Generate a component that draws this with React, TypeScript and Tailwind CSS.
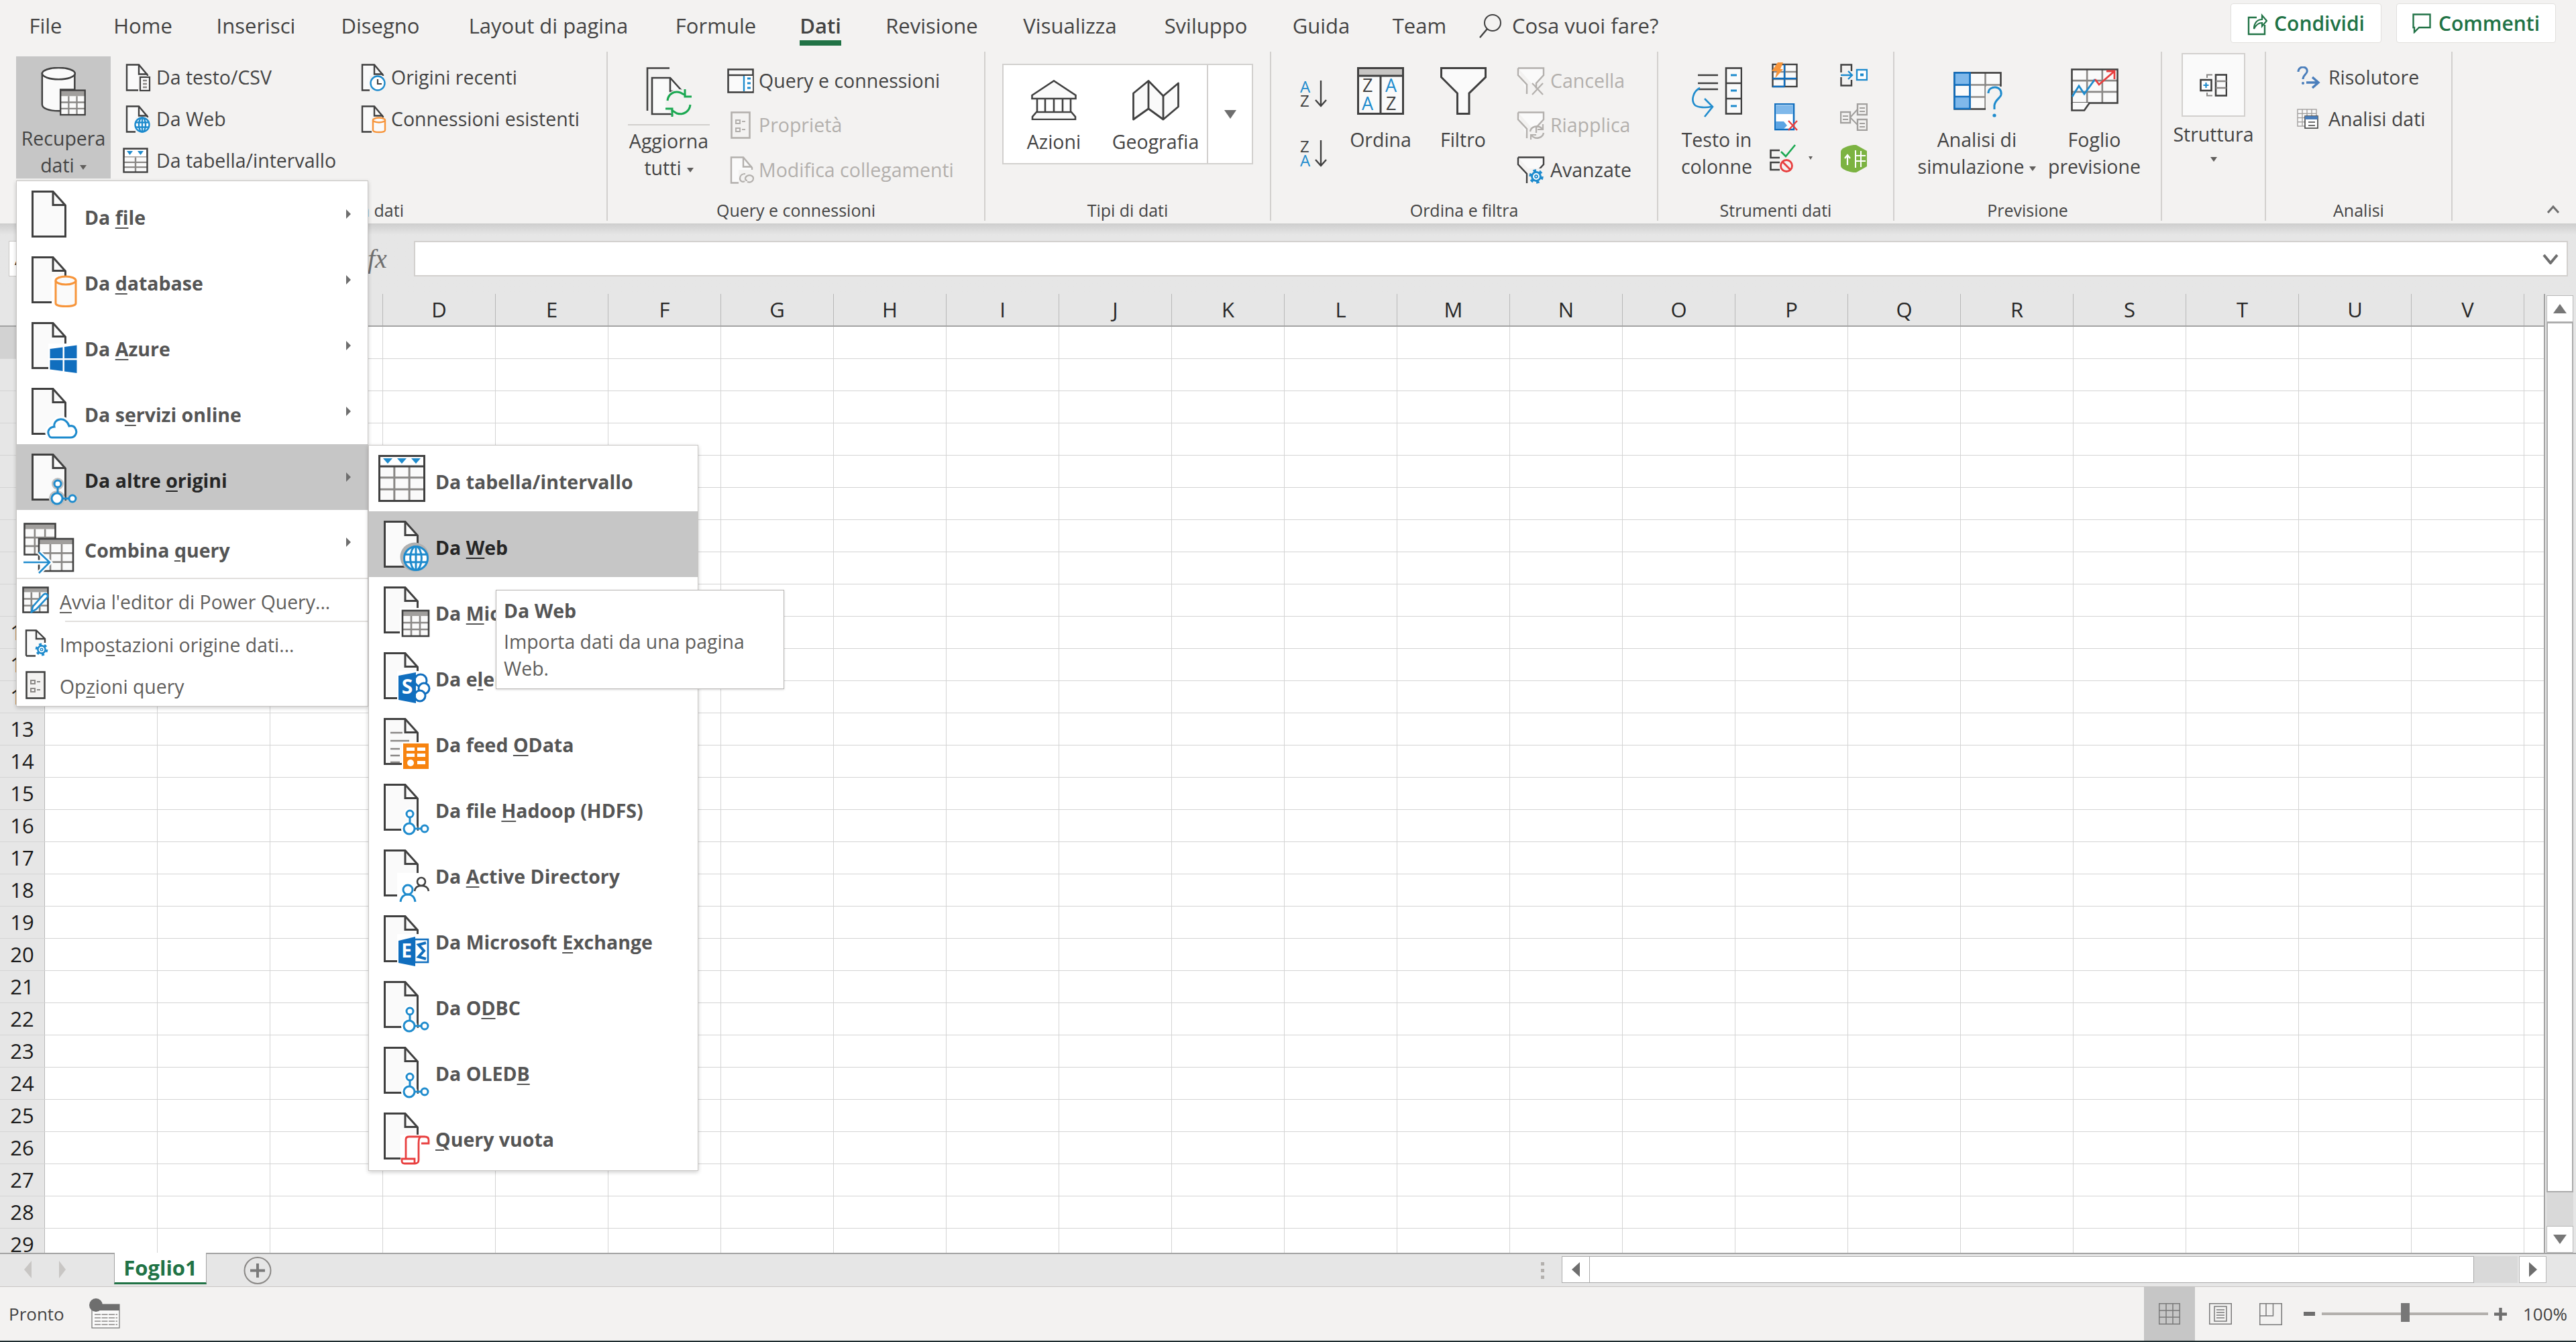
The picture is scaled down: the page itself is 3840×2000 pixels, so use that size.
import type { ReactNode } from "react"

const INK = "#404040"
const BLUE = "#1e8bcd"
const GRID_GRAY = "#8a8886"

const TABS = [
  { label: "File", w: "w-[120px]" },
  { label: "Home", w: "w-[170px]" },
  { label: "Inserisci", w: "w-[167px]" },
  { label: "Disegno", w: "w-[204px]" },
  { label: "Layout di pagina", w: "w-[297px]" },
  { label: "Formule", w: "w-[202px]" },
  { label: "Dati", w: "w-[110px]", active: true },
  { label: "Revisione", w: "w-[222px]" },
  { label: "Visualizza", w: "w-[190px]" },
  { label: "Sviluppo", w: "w-[215px]" },
  { label: "Guida", w: "w-[129px]" },
  { label: "Team", w: "w-[164px]" },
]

const COLUMNS = "ABCDEFGHIJKLMNOPQRSTUV".split("")
const ROWS = Array.from({ length: 29 }, (_, i) => i + 1)

function U({ children }: { children: ReactNode }) {
  return <span className="underline decoration-[2px] underline-offset-[4px]">{children}</span>
}

function Caret() {
  return (
    <svg width="10" height="7" viewBox="0 0 10 7" className="ml-[8px] inline-block align-middle">
      <path d="M0 0H10L5 7Z" fill="#605e5c" />
    </svg>
  )
}

function Chevron() {
  return (
    <svg width="7" height="14" viewBox="0 0 7 14" className="block">
      <path d="M0 0L7 7L0 14Z" fill="#6e6e6e" />
    </svg>
  )
}

// table drawn inside other svgs
function Table({ x, y, w, h, cols, rows, band = 0, stroke = INK, sw = 2.5, line = "#8a8886" }: {
  x: number; y: number; w: number; h: number; cols: number; rows: number; band?: number; stroke?: string; sw?: number; line?: string
}) {
  const cw = w / cols
  const rh = (h - band) / rows
  return (
    <g>
      <rect x={x} y={y} width={w} height={h} fill="#fafafa" />
      {band > 0 && <rect x={x} y={y} width={w} height={band} fill="#a19f9d" />}
      {Array.from({ length: cols - 1 }, (_, i) => (
        <line key={i} x1={x + cw * (i + 1)} x2={x + cw * (i + 1)} y1={y + band} y2={y + h} stroke={line} strokeWidth={sw} />
      ))}
      {Array.from({ length: rows - 1 }, (_, i) => (
        <line key={i} x1={x} x2={x + w} y1={y + band + rh * (i + 1)} y2={y + band + rh * (i + 1)} stroke={line} strokeWidth={sw} />
      ))}
      <rect x={x} y={y} width={w} height={h} fill="none" stroke={stroke} strokeWidth={sw} />
    </g>
  )
}

function Doc({ children }: { children?: ReactNode }) {
  return (
    <svg width="70" height="80" viewBox="0 0 70 80" className="block overflow-visible">
      <path d="M1.5 1.5H32L50.5 22V68.5H1.5Z" fill="#fafafa" stroke={INK} strokeWidth="3" />
      <path d="M32 1.5V21.5H50.5" fill="none" stroke={INK} strokeWidth="3" />
      {children}
    </svg>
  )
}

function Nodes({ halo }: { halo?: string }) {
  return (
    <g fill="#fff" stroke={BLUE} strokeWidth="3">
      <circle cx="39" cy="45" r="9" fill={halo ?? "#fff"} stroke="none" />
      <circle cx="38" cy="67" r="12" fill={halo ?? "#fff"} stroke="none" />
      <path d="M39 50V59M46 67H56" fill="none" />
      <circle cx="39" cy="45" r="5" />
      <circle cx="38" cy="67" r="8" />
      <circle cx="61" cy="67" r="5" />
    </g>
  )
}

function Globe({ cx, cy, r, sw, halo }: { cx: number; cy: number; r: number; sw: number; halo?: string }) {
  return (
    <g fill="none" stroke={BLUE} strokeWidth={sw}>
      {halo && <circle cx={cx - 2} cy={cy - 2} r={r + 4} fill={halo} stroke="none" />}
      <circle cx={cx} cy={cy} r={r} fill="#fff" />
      <ellipse cx={cx} cy={cy} rx={r * 0.48} ry={r} />
      <path d={`M${cx} ${cy - r}V${cy + r}M${cx - r} ${cy - r * 0.33}H${cx + r}M${cx - r} ${cy + r * 0.33}H${cx + r}`} />
    </g>
  )
}

function Gear({ cx, cy, r, sw = 3 }: { cx: number; cy: number; r: number; sw?: number }) {
  return (
    <g fill="#fff" stroke={BLUE}>
      <circle cx={cx} cy={cy} r={r * 1.1} strokeWidth={sw * 1.3} strokeDasharray={`${r * 0.55} ${r * 0.6}`} fill="none" />
      <circle cx={cx} cy={cy} r={r * 0.8} strokeWidth={sw} />
      <circle cx={cx} cy={cy} r={r * 0.25} strokeWidth={sw * 0.6} />
    </g>
  )
}

function SmallDoc({ stroke = INK, children }: { stroke?: string; children?: ReactNode }) {
  return (
    <svg width="36" height="41" viewBox="0 0 36 41" className="block overflow-visible">
      <path d="M1 39.5V1.5H19L32 17V39.5Z" fill="#fafafa" stroke={stroke} strokeWidth="2.4" />
      <path d="M19 1.5V15.5H32" fill="none" stroke={stroke} strokeWidth="2.4" />
      {children}
    </svg>
  )
}

function GetDataIcon() {
  return (
    <svg width="70" height="76" viewBox="0 0 70 76" className="block">
      <path d="M1.5 10V58C1.5 64 12 68 27 68H30V35H52V10Z" fill="#fafafa" stroke={INK} strokeWidth="2.6" />
      <ellipse cx="27" cy="10" rx="25.5" ry="9" fill="#fafafa" stroke={INK} strokeWidth="2.6" />
      <Table x={30} y={36} w={38} h={38} cols={3} rows={3} band={9} sw={2.4} />
    </svg>
  )
}

function RefreshAllIcon() {
  return (
    <svg width="68" height="76" viewBox="0 0 68 76" className="block">
      <path d="M2 65V1.5H35" fill="none" stroke={INK} strokeWidth="2.6" />
      <path d="M9 68V16H36L54 36V70H9Z" fill="#fafafa" stroke={INK} strokeWidth="2.6" />
      <path d="M36 16V36H54" fill="none" stroke={INK} strokeWidth="2.6" />
      <circle cx="49" cy="53" r="20" fill="#f3f2f1" />
      <path d="M32 50C33 40 42 35 51 38L59 42M66 56C65 66 56 72 46 69L38 64" fill="none" stroke="#1aa851" strokeWidth="3" />
      <path d="M58 33V44H68M39 74V62H29" fill="none" stroke="#1aa851" strokeWidth="3" />
    </svg>
  )
}

function BankIcon() {
  return (
    <svg width="68" height="60" viewBox="0 0 68 60" className="block">
      <path d="M1.5 23L34 1.5L66.5 23V28H1.5Z" fill="#fafafa" stroke={INK} strokeWidth="2.6" />
      <path d="M9 28V48M21 28V48M34 28V48M47 28V48M59 28V48" stroke={INK} strokeWidth="2.6" />
      <path d="M8 48H60L66 55V59H2V55Z" fill="#fafafa" stroke={INK} strokeWidth="2.6" />
    </svg>
  )
}

function MapIcon() {
  return (
    <svg width="70" height="61" viewBox="0 0 70 61" className="block">
      <path d="M1.5 20L24 1.5L46 24L68.5 5V40L46 59L24 43L1.5 59Z" fill="#fafafa" stroke={INK} strokeWidth="2.8" strokeLinejoin="round" />
      <path d="M24 1.5V43M46 24V59" fill="none" stroke={INK} strokeWidth="2.8" />
    </svg>
  )
}

function SortIcon({ first, second, firstBlue }: { first: string; second: string; firstBlue: boolean }) {
  return (
    <svg width="41" height="40" viewBox="0 0 41 40" className="block">
      <text x="0" y="18" fontSize="24" fontFamily="Open Sans" fill={firstBlue ? BLUE : INK}>{first}</text>
      <text x="0" y="39" fontSize="24" fontFamily="Open Sans" fill={firstBlue ? INK : BLUE}>{second}</text>
      <path d="M31 0V38M23 29L31 38L39 29" fill="none" stroke={INK} strokeWidth="2.4" />
    </svg>
  )
}

function SortBoxIcon() {
  return (
    <svg width="70" height="71" viewBox="0 0 70 71" className="block">
      <rect x="1.5" y="1.5" width="67" height="68" fill="#fafafa" stroke={INK} strokeWidth="3" />
      <rect x="3" y="3" width="64" height="9" fill="#c8c6c4" />
      <path d="M1.5 13H68.5M35 13V69" stroke={INK} strokeWidth="3" />
      <text x="8" y="37" fontSize="27" fontFamily="Open Sans" fill={INK}>Z</text>
      <text x="42" y="37" fontSize="27" fontFamily="Open Sans" fill={BLUE}>A</text>
      <text x="7" y="64" fontSize="27" fontFamily="Open Sans" fill={BLUE}>A</text>
      <text x="43" y="64" fontSize="27" fontFamily="Open Sans" fill={INK}>Z</text>
    </svg>
  )
}

function FunnelIcon() {
  return (
    <svg width="69" height="71" viewBox="0 0 69 71" className="block">
      <path d="M1.5 1.5H67.5V15L43 39V69.5H25.5V39L1.5 15Z" fill="#fafafa" stroke={INK} strokeWidth="3" />
    </svg>
  )
}

function SmallFunnel({ stroke, children }: { stroke: string; children?: ReactNode }) {
  return (
    <svg width="41" height="41" viewBox="0 0 41 41" className="block overflow-visible">
      <path d="M1 1.5H39V12L28 24V32M1 1.5V12L14 26V40" fill="#fafafa" stroke={stroke} strokeWidth="2.4" />
      {children}
    </svg>
  )
}

function TextColumnsIcon() {
  return (
    <svg width="76" height="76" viewBox="0 0 76 76" className="block">
      <rect x="52" y="1.5" width="23" height="68" fill="#fafafa" stroke={INK} strokeWidth="2.6" />
      <path d="M52 24H75M52 47H75" stroke={INK} strokeWidth="2.6" />
      <path d="M59 12H68M59 35H68M59 58H68" stroke={BLUE} strokeWidth="3" />
      <path d="M10 12H40M10 24H40M10 33H40" stroke={INK} strokeWidth="2.6" />
      <path d="M13 31C3 36 -1 50 6 57C10 60 22 61 30 59" fill="none" stroke={BLUE} strokeWidth="2.6" />
      <path d="M20 47L32 59L20 74" fill="none" stroke={BLUE} strokeWidth="2.6" />
    </svg>
  )
}

function FlashFillIcon() {
  return (
    <svg width="39" height="38" viewBox="0 0 39 38" className="block">
      <Table x={1.5} y={3} w={36} h={33} cols={2} rows={3} sw={2.4} />
      <path d="M19 3V36M1.5 24H37M1.5 36H19" stroke="#106ebe" strokeWidth="2.4" />
      <path d="M9 0H17L13 10H17L5 24L8 13H0Z" fill="#f7953b" />
    </svg>
  )
}

function RemoveDupIcon() {
  return (
    <svg width="36" height="41" viewBox="0 0 36 41" className="block">
      <rect x="1" y="1" width="28" height="38" fill="#fff" stroke="#106ebe" strokeWidth="2.6" />
      <rect x="2" y="3" width="26" height="13" fill="#7fb8ea" />
      <path d="M2 27H14L19 33L14 38H2Z" fill="#5da5e4" />
      <path d="M21 26L34 40M34 26L21 40" stroke="#e83f3f" strokeWidth="2.4" />
    </svg>
  )
}

function ValidationIcon() {
  return (
    <svg width="64" height="42" viewBox="0 0 64 42" className="block">
      <path d="M15 9H1.5V20H15M15 27H1.5V38H15" fill="none" stroke={INK} strokeWidth="2.6" />
      <path d="M17 11L24 18L38 1" fill="none" stroke="#1aa851" strokeWidth="2.6" />
      <circle cx="25" cy="32" r="8.5" fill="none" stroke="#e83f3f" strokeWidth="2.8" />
      <path d="M19 26L31 38" stroke="#e83f3f" strokeWidth="2.8" />
      <path d="M58 18H64L61 23Z" fill="#605e5c" />
    </svg>
  )
}

function ConsolidateIcon() {
  return (
    <svg width="41" height="34" viewBox="0 0 41 34" className="block">
      <path d="M17 11V1.5H1.5V13M1.5 20V32.5H17V24" fill="none" stroke={INK} strokeWidth="2.4" />
      <path d="M1 17H18M12 11L18 17L12 23" fill="none" stroke={BLUE} strokeWidth="2.4" />
      <rect x="25" y="9" width="15" height="15" fill="#fff" stroke={BLUE} strokeWidth="2.4" />
      <rect x="30" y="14.5" width="5" height="4" fill={BLUE} />
    </svg>
  )
}

function RelationIcon() {
  const gray = "#a19f9d"
  return (
    <svg width="41" height="41" viewBox="0 0 41 41" className="block">
      <rect x="1" y="13" width="14" height="16" fill="none" stroke={gray} strokeWidth="2.4" />
      <rect x="26" y="1" width="14" height="16" fill="none" stroke={gray} strokeWidth="2.4" />
      <rect x="26" y="24" width="14" height="16" fill="none" stroke={gray} strokeWidth="2.4" />
      <path d="M15 21L26 9M15 21L26 32M4 19H12M4 24H12M29 7H37M29 12H37M29 30H37M29 35H37" fill="none" stroke={gray} strokeWidth="2" />
    </svg>
  )
}

function DataModelIcon() {
  return (
    <svg width="41" height="41" viewBox="0 0 41 41" className="block">
      <path d="M1 10C1 6 8 2 20 0H24L40 9V32L24 41H20C8 39 1 35 1 31Z" fill="#7cb342" />
      <path d="M23 8V34M31 9V33M23 16H38M23 24H38" stroke="#fff" strokeWidth="2" />
      <path d="M7 20L11 15L15 20M11 15V30" fill="none" stroke="#fff" strokeWidth="2.2" />
    </svg>
  )
}

function WhatIfIcon() {
  return (
    <svg width="76" height="69" viewBox="0 0 76 69" className="block">
      <Table x={1.5} y={1.5} w={69} h={54} cols={3} rows={3} sw={2.6} line="#8a8886" />
      <rect x="1.5" y="1.5" width="23" height="18" fill="#7fb8ea" />
      <rect x="1.5" y="37" width="23" height="18" fill="#7fb8ea" />
      <path d="M1.5 55V1.5H24.5V55ZM1.5 19.5H24.5M1.5 37H24.5" fill="none" stroke="#106ebe" strokeWidth="2.6" />
      <rect x="48" y="22" width="28" height="47" fill="#f3f2f1" />
      <path d="M52 32C52 25 58 23 62 23C68 23 72 28 71 34C70 39 62 42 61 50V56" fill="none" stroke={BLUE} strokeWidth="3" />
      <circle cx="61" cy="65" r="2.6" fill={BLUE} />
    </svg>
  )
}

function ForecastIcon() {
  return (
    <svg width="71" height="64" viewBox="0 0 71 64" className="block">
      <Table x={1.5} y={1.5} w={68} h={50} cols={3} rows={3} sw={2.6} />
      <path d="M1.5 51V62.5H20L28 51" fill="#fafafa" stroke={INK} strokeWidth="2.6" />
      <path d="M2 42L12 26L20 38L36 16" fill="none" stroke={BLUE} strokeWidth="2.8" />
      <path d="M36 16L42 24L65 4M53 4H65V16" fill="none" stroke="#e83f3f" strokeWidth="2.8" />
    </svg>
  )
}

function OutlineIcon() {
  return (
    <svg width="41" height="34" viewBox="0 0 41 34" className="block">
      <rect x="24" y="1.5" width="16" height="31" fill="#fafafa" stroke={INK} strokeWidth="2.6" />
      <path d="M24 11H40M24 21H40" stroke={GRID_GRAY} strokeWidth="2.4" />
      <path d="M11 6V1.5H19M11 28V32.5H19" fill="none" stroke={GRID_GRAY} strokeWidth="2" />
      <rect x="1.5" y="9" width="16" height="16" fill="#fff" stroke={INK} strokeWidth="2.6" />
      <path d="M9.5 13V21M5.5 17H13.5" stroke={BLUE} strokeWidth="2.2" />
    </svg>
  )
}

function QueriesIcon() {
  return (
    <svg width="40" height="37" viewBox="0 0 40 37" className="block">
      <rect x="1.5" y="1.5" width="37" height="34" fill="#fafafa" stroke={INK} strokeWidth="2.6" />
      <path d="M1.5 10H38.5" stroke={INK} strokeWidth="2.6" />
      <rect x="25" y="11" width="13" height="23" fill="#fff" />
      <path d="M25 11V34" stroke={BLUE} strokeWidth="2.4" />
      <path d="M30 15H35M30 22H35M30 29H35" stroke={BLUE} strokeWidth="3" />
    </svg>
  )
}

function MenuTableSource() {
  return (
    <svg width="70" height="70" viewBox="0 0 70 70" className="block -ml-[8px]">
      <Table x={1.5} y={1.5} w={67} h={67} cols={3} rows={3} band={15} sw={3} />
      <rect x="3" y="3" width="64" height="14" fill="#fff" />
      <path d="M1.5 17H68.5" stroke={INK} strokeWidth="3" />
      <path d="M7 5H21L14 13ZM28 5H42L35 13ZM49 5H63L56 13Z" fill={BLUE} />
    </svg>
  )
}

function CombineIcon() {
  return (
    <svg width="76" height="76" viewBox="0 0 76 76" className="block">
      <Table x={1.5} y={1.5} w={46} h={46} cols={3} rows={3} band={8} sw={2.6} />
      <Table x={23} y={24} w={51} h={48} cols={3} rows={3} band={8} sw={2.6} />
      <path d="M0 59H38M23 44L39 59L23 75" fill="none" stroke="#fff" strokeWidth="7" />
      <path d="M0 59H38M23 44L39 59L23 75" fill="none" stroke={BLUE} strokeWidth="2.6" />
    </svg>
  )
}

type MenuRowProps = {
  icon: ReactNode
  label: ReactNode
  active?: boolean
  chevron?: boolean
  sub?: boolean
}

function MenuRow({ icon, label, active, chevron, sub }: MenuRowProps) {
  return (
    <div className={`flex h-[98px] pt-[14px] pl-[22px] ${active ? "bg-[#c6c6c6] text-[#262626]" : "text-[#555555]"}`}>
      <div className={`shrink-0 ${sub ? "w-[77px]" : "w-[79px]"}`}>{icon}</div>
      <div className="mt-[20px] h-[40px] text-[28.5px] leading-[40px] font-bold whitespace-nowrap">{label}</div>
      {chevron && (
        <div className="mt-[28px] mr-[25px] ml-auto">
          <Chevron />
        </div>
      )}
    </div>
  )
}

function PlainRow({ icon, label, h, slot }: { icon: ReactNode; label: ReactNode; h: string; slot: string }) {
  return (
    <div className={`flex items-center ${h}`}>
      <div className={`shrink-0 ${slot}`}>{icon}</div>
      <div className="pt-[6px] text-[28.4px] whitespace-nowrap text-[#605e5c]">{label}</div>
    </div>
  )
}

function MainMenu() {
  return (
    <div className="absolute top-[269px] left-[24px] flex h-[784px] w-[525px] flex-col border border-[#c8c6c4] bg-white shadow-[0_2px_6px_rgba(0,0,0,0.2)]">
      <MenuRow chevron icon={<Doc />} label={<>Da <U>f</U>ile</>} />
      <MenuRow
        chevron
        icon={
          <Doc>
            <path d="M30 36V72L51 80L70 72V30H30Z" fill="#fff" />
            <path d="M36 36V70C36 76 66 76 66 70V36" fill="#fafafa" stroke="#f7953b" strokeWidth="3" />
            <ellipse cx="51" cy="36" rx="15" ry="6" fill="#fafafa" stroke="#f7953b" strokeWidth="3" />
          </Doc>
        }
        label={<>Da <U>d</U>atabase</>}
      />
      <MenuRow
        chevron
        icon={
          <Doc>
            <rect x="25" y="32" width="44" height="46" fill="#fff" />
            <path d="M27.5 40L46.5 37.5V54H27.5ZM49 37L67.5 34.5V54H49ZM27.5 56.5H46.5V73L27.5 70.5ZM49 56.5H67.5V76L49 73.5Z" fill="#106ebe" />
          </Doc>
        }
        label={<>Da <U>A</U>zure</>}
      />
      <MenuRow
        chevron
        icon={
          <Doc>
            <path d="M30 74H58C66 74 68 66 66 62C64 57 60 56 56 57C54 50 48 46 42 47C36 48 33 53 34 58C28 58 24 63 25 68C26 72 28 74 30 74Z" fill="#fff" stroke="#fff" strokeWidth="9" />
            <path d="M30 74H58C66 74 68 66 66 62C64 57 60 56 56 57C54 50 48 46 42 47C36 48 33 53 34 58C28 58 24 63 25 68C26 72 28 74 30 74Z" fill="#fff" stroke={BLUE} strokeWidth="3" />
          </Doc>
        }
        label={<>Da s<U>e</U>rvizi online</>}
      />
      <MenuRow
        active
        chevron
        icon={
          <Doc>
            <Nodes halo="#c0c0c0" />
          </Doc>
        }
        label={<>Da altre <U>o</U>rigini</>}
      />
      <div className="flex h-[103px] border-b-[2px] border-[#e1dfdd] pt-[19px] pl-[10px] text-[#555555]">
        <div className="w-[91px] shrink-0">
          <CombineIcon />
        </div>
        <div className="mt-[21px] h-[40px] text-[28.5px] leading-[40px] font-bold whitespace-nowrap">
          Combina <U>q</U>uery
        </div>
        <div className="mt-[22px] mr-[25px] ml-auto">
          <Chevron />
        </div>
      </div>
      <div className="pl-[8px]">
        <PlainRow
          h="h-[62px]"
          slot="w-[56px]"
          icon={
            <svg width="40" height="40" viewBox="0 0 40 40" className="block">
              <Table x={1.5} y={1.5} w={37} h={37} cols={3} rows={3} band={7} sw={2.6} />
              <path d="M14 38L16 30L32 12C36 9 40 13 37 17L21 34Z" fill="#fff" stroke={BLUE} strokeWidth="2.6" />
            </svg>
          }
          label={<><U>A</U>vvia l'editor di Power Query...</>}
        />
      </div>
      <div className="ml-[72px] h-[2px] bg-[#e1dfdd]" />
      <div className="pl-[13px]">
        <PlainRow
          h="h-[63px]"
          slot="w-[51px]"
          icon={
            <svg width="36" height="41" viewBox="0 0 36 41" className="block overflow-visible">
              <path d="M1 39.5V1.5H16L29 14V20M15 39.5H1" fill="#fafafa" stroke={INK} strokeWidth="2.4" />
              <path d="M16 1.5V14H29" fill="none" stroke={INK} strokeWidth="2.4" />
              <Gear cx={24} cy={30} r={7} sw={2.6} />
            </svg>
          }
          label={<>Impo<U>s</U>tazioni origine dati...</>}
        />
        <PlainRow
          h="h-[61px]"
          slot="w-[51px]"
          icon={
            <svg width="30" height="42" viewBox="0 0 30 42" className="block">
              <rect x="1.5" y="1.5" width="27" height="39" fill="#f3f2f1" stroke={INK} strokeWidth="2.6" />
              <path d="M8 14H14V19H8ZM8 26H14V31H8Z" fill="none" stroke={GRID_GRAY} strokeWidth="2" />
              <path d="M17 16H22M17 28H22" stroke={GRID_GRAY} strokeWidth="2" />
            </svg>
          }
          label={<>Op<U>z</U>ioni query</>}
        />
      </div>
    </div>
  )
}

function SubMenu() {
  const odbcNodes = (
    <Doc>
      <Nodes />
    </Doc>
  )
  return (
    <div className="absolute top-[663px] left-[549px] flex h-[1082px] w-[492px] flex-col border border-[#c8c6c4] bg-white shadow-[0_2px_6px_rgba(0,0,0,0.2)]">
      <MenuRow sub icon={<MenuTableSource />} label="Da tabella/intervallo" />
      <MenuRow
        sub
        active
        icon={
          <Doc>
            <Globe cx={48} cy={56} r={17.5} sw={3} halo="#b0b0b0" />
          </Doc>
        }
        label={<>Da <U>W</U>eb</>}
      />
      <MenuRow
        sub
        icon={
          <Doc>
            <rect x="24" y="32" width="46" height="46" fill="#fff" />
            <Table x={28} y={36} w={39} h={38} cols={3} rows={3} band={8} sw={2.6} />
          </Doc>
        }
        label={<>Da <U>M</U>icrosoft Query</>}
      />
      <MenuRow
        sub
        icon={
          <Doc>
            <rect x="20" y="28" width="50" height="50" fill="#fff" />
            <circle cx="55" cy="42" r="9" fill="#fff" stroke="#106ebe" strokeWidth="3" />
            <circle cx="60" cy="54" r="8" fill="#fff" stroke="#106ebe" strokeWidth="3" />
            <circle cx="54" cy="65" r="8" fill="#fff" stroke="#106ebe" strokeWidth="3" />
            <path d="M22 35L48 30V76L22 71Z" fill="#106ebe" />
            <text x="35" y="62" textAnchor="middle" fontSize="30" fontWeight="700" fontFamily="Open Sans" fill="#fff">S</text>
          </Doc>
        }
        label={<>Da e<U>l</U>enco SharePoint</>}
      />
      <MenuRow
        sub
        icon={
          <Doc>
            <path d="M10 22H28M10 34H38M10 46H24M10 56H24M10 66H24" stroke={GRID_GRAY} strokeWidth="2.6" />
            <rect x="27" y="36" width="42" height="42" fill="#fff" />
            <rect x="29" y="38" width="38" height="38" fill="#f7830f" />
            <path d="M34 44H46V49H34ZM50 44H62V49H50ZM34 53H46V58H34ZM50 53H62V58H50ZM50 64H62V69H50Z" fill="#fff" />
            <circle cx="40" cy="67" r="5" fill="#fff" />
          </Doc>
        }
        label={<>Da feed <U>O</U>Data</>}
      />
      <MenuRow sub icon={odbcNodes} label={<>Da file <U>H</U>adoop (HDFS)</>} />
      <MenuRow
        sub
        icon={
          <Doc>
            <rect x="20" y="35" width="50" height="45" fill="#fff" />
            <circle cx="56" cy="48" r="6" fill="#fff" stroke={INK} strokeWidth="2.6" />
            <path d="M46 62C47 55 52 54 56 54C60 54 66 55 67 62" fill="none" stroke={INK} strokeWidth="2.6" />
            <circle cx="36" cy="60" r="7" fill="#fff" stroke={BLUE} strokeWidth="3" />
            <path d="M25 78C26 70 31 67 36 67C41 67 46 70 47 78" fill="none" stroke={BLUE} strokeWidth="3" />
          </Doc>
        }
        label={<>Da <U>A</U>ctive Directory</>}
      />
      <MenuRow
        sub
        icon={
          <Doc>
            <rect x="20" y="28" width="50" height="50" fill="#fff" />
            <rect x="46" y="36" width="20" height="34" fill="#fff" stroke="#106ebe" strokeWidth="2.6" />
            <path d="M63 41L52 44L60 53L52 62L63 65" fill="none" stroke="#106ebe" strokeWidth="4" />
            <path d="M22 38L47 32V76L22 71Z" fill="#106ebe" />
            <text x="34" y="63" textAnchor="middle" fontSize="28" fontWeight="700" fontFamily="Open Sans" fill="#fff">E</text>
          </Doc>
        }
        label={<>Da Microsoft <U>E</U>xchange</>}
      />
      <MenuRow sub icon={odbcNodes} label={<>Da O<U>D</U>BC</>} />
      <MenuRow sub icon={odbcNodes} label={<>Da OLED<U>B</U></>} />
      <MenuRow
        sub
        icon={
          <Doc>
            <rect x="25" y="33" width="45" height="46" fill="#fff" />
            <path d="M33 68V40C33 37 35 36 38 36H61C65 36 67 38 67 41V46H56M56 36C53 37 52 39 52 46V71C52 74 50 76 47 76H31C28 76 27 74 27 72V69H46V75" fill="none" stroke="#e83f3f" strokeWidth="2.8" />
          </Doc>
        }
        label={<><U>Q</U>uery vuota</>}
      />
    </div>
  )
}

function WebTooltip() {
  return (
    <div className="absolute top-[879px] left-[739px] h-[148px] w-[430px] border border-[#b8b6b4] bg-white pt-[10px] pl-[11px] text-[#555555] shadow-[0_1px_3px_rgba(0,0,0,0.15)]">
      <div className="text-[28.5px] leading-[40px] font-bold">Da Web</div>
      <div className="mt-[6px] text-[28.4px] leading-[40px] text-[#605e5c]">
        Importa dati da una pagina
        <br />
        Web.
      </div>
    </div>
  )
}

function SmallBtn({ icon, label, slot, h, disabled }: { icon: ReactNode; label: string; slot: string; h: string; disabled?: boolean }) {
  return (
    <div className={`flex items-center ${h}`}>
      <div className={`shrink-0 ${slot}`}>{icon}</div>
      <span className={`whitespace-nowrap ${disabled ? "text-[#b3b0ad]" : ""}`}>{label}</span>
    </div>
  )
}

function TwoLine({ first, second, caret }: { first: string; second?: string; caret?: boolean }) {
  return (
    <div className="text-center leading-[40px] whitespace-nowrap">
      <div>{first}</div>
      {second !== undefined && (
        <div>
          {second}
          {caret && <Caret />}
        </div>
      )}
    </div>
  )
}

function Group({ w, label, children, labelClass }: { w: string; label?: string; children: ReactNode; labelClass?: string }) {
  return (
    <div className={`flex h-[252px] shrink-0 flex-col border-r-[2px] border-[#d2d0ce] ${w}`}>
      <div className="flex h-[221px]">{children}</div>
      <div className={`flex h-[34px] items-center pt-[4px] text-[25px] whitespace-nowrap ${labelClass ?? "justify-center"}`}>{label}</div>
    </div>
  )
}

function Ribbon() {
  return (
    <div className="flex h-[256px] shrink-0 bg-[#f3f2f1] text-[28.5px] text-[#444444]">
      <Group w="w-[906px]" label="Recupera e trasforma dati" labelClass="justify-end pr-[302px]">
        <div className="mt-[7px] ml-[24px] flex h-[182px] w-[141px] flex-col items-center bg-[#c6c6c6] pt-[16px]">
          <GetDataIcon />
          <div className="mt-[13px]">
            <TwoLine first="Recupera" second="dati" caret />
          </div>
        </div>
        <div className="mt-[7px] ml-[18px] w-[350px]">
          <SmallBtn
            h="h-[62px]"
            slot="w-[50px] pl-[5px]"
            label="Da testo/CSV"
            icon={
              <SmallDoc>
                <rect x="18" y="18" width="18" height="23" fill="#f3f2f1" />
                <rect x="21" y="20" width="14" height="20" fill="#fafafa" stroke={INK} strokeWidth="2.2" />
                <path d="M25 25H31M25 30H31M25 35H31" stroke={GRID_GRAY} strokeWidth="2.4" />
              </SmallDoc>
            }
          />
          <SmallBtn
            h="h-[62px]"
            slot="w-[50px] pl-[5px]"
            label="Da Web"
            icon={
              <SmallDoc>
                <rect x="14" y="18" width="22" height="23" fill="#f3f2f1" />
                <Globe cx={24} cy={29} r={10.5} sw={2.4} />
              </SmallDoc>
            }
          />
          <SmallBtn
            h="h-[62px]"
            slot="w-[50px]"
            label="Da tabella/intervallo"
            icon={
              <svg width="38" height="38" viewBox="0 0 38 38" className="block">
                <Table x={1.5} y={1.5} w={35} h={35} cols={2} rows={3} band={13} sw={2.4} />
                <rect x="3" y="3" width="32" height="10" fill="#fff" />
                <path d="M6 5H15L10.5 11ZM22 5H31L26.5 11Z" fill={BLUE} />
              </svg>
            }
          />
        </div>
        <div className="mt-[7px]">
          <SmallBtn
            h="h-[62px]"
            slot="w-[50px] pl-[6px]"
            label="Origini recenti"
            icon={
              <SmallDoc>
                <rect x="12" y="18" width="24" height="23" fill="#f3f2f1" />
                <circle cx="24" cy="29" r="10.5" fill="#fff" stroke={BLUE} strokeWidth="2.4" />
                <path d="M24 23V30H30" fill="none" stroke={INK} strokeWidth="2.2" />
              </SmallDoc>
            }
          />
          <SmallBtn
            h="h-[62px]"
            slot="w-[50px] pl-[6px]"
            label="Connessioni esistenti"
            icon={
              <SmallDoc>
                <rect x="15" y="18" width="21" height="23" fill="#f3f2f1" />
                <path d="M17 22V37C17 41 35 41 35 37V22" fill="#fafafa" stroke="#f7953b" strokeWidth="2.4" />
                <ellipse cx="26" cy="22" rx="9" ry="3.5" fill="#fafafa" stroke="#f7953b" strokeWidth="2.4" />
              </SmallDoc>
            }
          />
        </div>
      </Group>

      <Group w="w-[563px]" label="Query e connessioni">
        <div className="ml-[30px] flex w-[122px] flex-col items-center pt-[23px]">
          <RefreshAllIcon />
          <div className="mt-[9px] h-[2px] w-full bg-[#d2d0ce]" />
          <div className="mt-[3px]">
            <TwoLine first="Aggiorna" second="tutti" caret />
          </div>
        </div>
        <div className="ml-[26px] pt-[10px]">
          <SmallBtn h="h-[66.5px]" slot="w-[47px]" label="Query e connessioni" icon={<QueriesIcon />} />
          <SmallBtn
            h="h-[66.5px]"
            slot="w-[47px] pl-[5px]"
            label="Proprietà"
            disabled
            icon={
              <svg width="30" height="41" viewBox="0 0 30 41" className="block">
                <rect x="1.5" y="1.5" width="27" height="38" fill="#f3f2f1" stroke="#b3b0ad" strokeWidth="2.6" />
                <path d="M8 13H14V18H8ZM8 25H14V30H8Z" fill="none" stroke="#b3b0ad" strokeWidth="2" />
                <path d="M17 15H22M17 27H22" stroke="#b3b0ad" strokeWidth="2" />
              </svg>
            }
          />
          <SmallBtn
            h="h-[66.5px]"
            slot="w-[47px] pl-[5px]"
            label="Modifica collegamenti"
            disabled
            icon={
              <SmallDoc stroke="#b3b0ad">
                <rect x="12" y="20" width="24" height="21" fill="#f3f2f1" />
                <path d="M22 26C16 26 14 30 14 33C14 37 18 39 21 37M25 38C31 40 34 36 34 33C34 29 29 27 25 29C21 31 21 36 25 36" fill="none" stroke="#b3b0ad" strokeWidth="2.2" />
              </SmallDoc>
            }
          />
        </div>
      </Group>

      <Group w="w-[426px]" label="Tipi di dati">
        <div className="mt-[18px] ml-[25px] flex h-[150px] w-[374px] border-[2px] border-[#d2d0ce] bg-white">
          <div className="flex w-[150px] flex-col items-center pt-[22px]">
            <BankIcon />
            <div className="mt-[12px] leading-[40px]">Azioni</div>
          </div>
          <div className="flex w-[153px] flex-col items-center pt-[22px]">
            <MapIcon />
            <div className="mt-[11px] leading-[40px]">Geografia</div>
          </div>
          <div className="flex flex-1 items-center justify-center border-l-[2px] border-[#d2d0ce]">
            <svg width="18" height="13" viewBox="0 0 18 13" className="block">
              <path d="M0 0H18L9 13Z" fill="#6e6e6e" />
            </svg>
          </div>
        </div>
      </Group>

      <Group w="w-[577px]" label="Ordina e filtra">
        <div className="ml-[43px] flex w-[41px] flex-col pt-[43px]">
          <SortIcon first="A" second="Z" firstBlue />
          <div className="mt-[49px]">
            <SortIcon first="Z" second="A" firstBlue={false} />
          </div>
        </div>
        <div className="ml-[34px] flex w-[90px] flex-col items-center pt-[23px]">
          <SortBoxIcon />
          <div className="mt-[17px] leading-[40px]">Ordina</div>
        </div>
        <div className="ml-[33px] flex w-[90px] flex-col items-center pt-[23px]">
          <FunnelIcon />
          <div className="mt-[17px] leading-[40px]">Filtro</div>
        </div>
        <div className="ml-[36px] pt-[10px]">
          <SmallBtn
            h="h-[66.5px]"
            slot="w-[49px]"
            label="Cancella"
            disabled
            icon={
              <SmallFunnel stroke="#b3b0ad">
                <path d="M22 24L38 41M38 24L22 41" stroke="#b3b0ad" strokeWidth="2.2" />
              </SmallFunnel>
            }
          />
          <SmallBtn
            h="h-[66.5px]"
            slot="w-[49px]"
            label="Riapplica"
            disabled
            icon={
              <SmallFunnel stroke="#b3b0ad">
                <path d="M19 30C20 23 30 19 37 26M39 32C38 39 28 43 21 36" fill="none" stroke="#b3b0ad" strokeWidth="2.4" />
                <path d="M38 19V27H30M20 42V35H28" fill="none" stroke="#b3b0ad" strokeWidth="2.2" />
              </SmallFunnel>
            }
          />
          <SmallBtn
            h="h-[66.5px]"
            slot="w-[49px]"
            label="Avanzate"
            icon={
              <SmallFunnel stroke={INK}>
                <rect x="16" y="18" width="25" height="24" fill="#f3f2f1" />
                <Gear cx={28} cy={30} r={8} sw={3} />
              </SmallFunnel>
            }
          />
        </div>
      </Group>

      <Group w="w-[352px]" label="Strumenti dati">
        <div className="ml-[37px] flex w-[100px] flex-col items-center pt-[23px]">
          <TextColumnsIcon />
          <div className="mt-[12px]">
            <TwoLine first="Testo in" second="colonne" />
          </div>
        </div>
        <div className="ml-[29px] w-[105px] pt-[4px]">
          <div className="flex h-[62px] items-center pl-[3px]">
            <FlashFillIcon />
          </div>
          <div className="flex h-[62px] items-center pl-[7px]">
            <RemoveDupIcon />
          </div>
          <div className="flex h-[62px] items-center">
            <ValidationIcon />
          </div>
        </div>
        <div className="pt-[4px]">
          <div className="flex h-[62px] items-center">
            <ConsolidateIcon />
          </div>
          <div className="flex h-[62px] items-center">
            <RelationIcon />
          </div>
          <div className="flex h-[62px] items-center">
            <DataModelIcon />
          </div>
        </div>
      </Group>

      <Group w="w-[399px]" label="Previsione">
        <div className="ml-[23px] flex w-[200px] flex-col items-center pt-[30px]">
          <div className="ml-[6px] h-[81px]">
            <WhatIfIcon />
          </div>
          <TwoLine first="Analisi di" second="simulazione" caret />
        </div>
        <div className="flex w-[150px] flex-col items-center pt-[25px]">
          <div className="h-[86px]">
            <ForecastIcon />
          </div>
          <TwoLine first="Foglio" second="previsione" />
        </div>
      </Group>

      <Group w="w-[155px]">
        <div className="flex w-full flex-col items-center pt-[2px]">
          <div className="flex h-[95px] w-[95px] items-center justify-center border-[2px] border-[#d2d0ce] bg-[#fafafa]">
            <OutlineIcon />
          </div>
          <div className="mt-[6px] leading-[40px]">Struttura</div>
          <svg width="10" height="7" viewBox="0 0 10 7" className="mt-[14px] block">
            <path d="M0 0H10L5 7Z" fill="#605e5c" />
          </svg>
        </div>
      </Group>

      <Group w="w-[278px]" label="Analisi">
        <div className="mt-[7px] ml-[46px]">
          <SmallBtn
            h="h-[62px]"
            slot="w-[47px]"
            label="Risolutore"
            icon={
              <svg width="35" height="33" viewBox="0 0 35 33" className="block">
                <path d="M2 8C2 3 6 1 9 1C13 1 16 4 15 8C14 12 9 13 9 19" fill="none" stroke="#4a7ebb" strokeWidth="3" />
                <circle cx="9" cy="25" r="2" fill="#4a7ebb" />
                <path d="M14 24H30M23 16L32 24L23 32" fill="none" stroke="#4a7ebb" strokeWidth="3.4" />
              </svg>
            }
          />
          <SmallBtn
            h="h-[62px]"
            slot="w-[47px]"
            label="Analisi dati"
            icon={
              <svg width="32" height="30" viewBox="0 0 32 30" className="block">
                <Table x={1} y={1} w={28} h={25} cols={4} rows={4} sw={1.4} line="#a19f9d" stroke="#a19f9d" />
                <rect x="12" y="11" width="19" height="18" fill="#fff" stroke={INK} strokeWidth="1.6" />
                <rect x="12" y="11" width="19" height="5" fill="#4a7ebb" />
                <path d="M17 20H27M17 25H27" stroke={INK} strokeWidth="1.6" />
              </svg>
            }
          />
        </div>
      </Group>

      <div className="flex flex-1 items-end justify-end pr-[25px] pb-[15px]">
        <svg width="18" height="12" viewBox="0 0 18 12" className="block">
          <path d="M1 11L9 2L17 11" fill="none" stroke="#6e6e6e" strokeWidth="3" />
        </svg>
      </div>
    </div>
  )
}

function TabBar() {
  return (
    <div className="flex h-[77px] shrink-0 bg-[#f3f2f1] pl-[8px] text-[31px] text-[#444444]">
      {TABS.map((tab) => (
        <div key={tab.label} className={`flex flex-col items-center pt-[15px] ${tab.w}`}>
          <div className={`h-[45px] leading-[46px] whitespace-nowrap ${tab.active ? "font-semibold" : ""}`}>{tab.label}</div>
          {tab.active && <div className="h-[8px] w-[62px] bg-[#217346]" />}
        </div>
      ))}
      <div className="ml-[7px] flex h-[60px] items-center pt-[17px]">
        <svg width="34" height="36" viewBox="0 0 34 36" className="block">
          <ellipse cx="20" cy="13" rx="12" ry="12" fill="none" stroke={INK} strokeWidth="2" />
          <path d="M12 22L1 35" stroke={INK} strokeWidth="2.4" />
        </svg>
        <span className="ml-[15px] whitespace-nowrap">Cosa vuoi fare?</span>
      </div>
      <div className="ml-auto flex pt-[5px] pr-[30px] text-[30px] text-[#217346]">
        <div className="flex h-[59px] w-[225px] items-center justify-center rounded-[4px] border border-[#e1dfdd] bg-white font-semibold">
          <svg width="30" height="36" viewBox="0 0 30 36" className="mr-[10px] block">
            <path d="M14 9H2V34H26V20" fill="none" stroke="#217346" strokeWidth="2.4" />
            <path d="M10 26C10 17 15 12 22 12V6L29 14L22 22V17C17 17 13 20 10 26Z" fill="#fff" stroke="#217346" strokeWidth="2.2" />
          </svg>
          Condividi
        </div>
        <div className="ml-[22px] flex h-[59px] w-[238px] items-center justify-center rounded-[4px] border border-[#e1dfdd] bg-white font-semibold">
          <svg width="28" height="30" viewBox="0 0 28 30" className="mr-[11px] block">
            <path d="M1.5 1.5H26.5V21H10L3 28V21H1.5Z" fill="#fff" stroke="#217346" strokeWidth="2.4" />
          </svg>
          Commenti
        </div>
      </div>
    </div>
  )
}

function FormulaBar() {
  return (
    <div className="h-[105px] shrink-0 bg-linear-to-b from-[#cdcdcd] from-0% to-[#e6e6e6] to-[16%]">
      <div className="flex pt-[26px] pl-[13px]">
        <div className="flex h-[53px] w-[200px] items-center border border-[#c8c6c4] bg-white pl-[8px] text-[27px] text-[#262626]">A1</div>
        <div className="ml-[335px] flex h-[53px] w-[69px] items-center font-['Liberation_Serif',serif] text-[40px] text-[#6e6e6e] italic">fx</div>
        <div className="flex h-[53px] w-[3211px] items-center justify-end border-[2px] border-[#d2d0ce] bg-white pr-[12px]">
          <svg width="24" height="16" viewBox="0 0 24 16" className="block">
            <path d="M2 2L12 14L22 2" fill="none" stroke="#6e6e6e" strokeWidth="4" />
          </svg>
        </div>
      </div>
    </div>
  )
}

function Sheet() {
  return (
    <div className="flex h-[1429px] shrink-0">
      <div className="flex w-[3792px] shrink-0 flex-col overflow-hidden">
        <div className="flex h-[49px] shrink-0 border-b-[2px] border-[#a3a3a3] bg-[#e6e6e6] text-[31px] text-[#262626]">
          <div className="w-[67px] shrink-0 border-r border-[#b8b8b8]" />
          {COLUMNS.map((c, i) => (
            <div key={c} className={`flex w-[168px] shrink-0 items-center justify-center border-r border-[#b8b8b8] ${i === 0 ? "bg-[#d2d2d2]" : ""}`}>
              {c}
            </div>
          ))}
        </div>
        {ROWS.map((r) => (
          <div key={r} className="flex h-[48px] shrink-0 border-b border-[#d4d4d4] bg-white">
            <div className={`flex w-[67px] shrink-0 items-center justify-center border-r border-[#b8b8b8] text-[31px] text-[#1a1a1a] ${r === 1 ? "bg-[#d2d2d2]" : "bg-[#e6e6e6]"}`}>
              {r}
            </div>
            {COLUMNS.map((c) => (
              <div key={c} className="w-[168px] shrink-0 border-r border-[#d4d4d4]" />
            ))}
          </div>
        ))}
      </div>
      <div className="flex flex-1 flex-col border-l-[2px] border-[#a3a3a3] bg-[#e6e6e6] pt-[2px] pl-[2px]">
        <div className="flex h-[40px] w-[40px] items-center justify-center border-[1.5px] border-[#b8b8b8] bg-white">
          <svg width="20" height="14" viewBox="0 0 20 14" className="block">
            <path d="M10 0L20 14H0Z" fill="#777777" />
          </svg>
        </div>
        <div className="h-[1297px] w-[40px] border-[2px] border-[#ababab] bg-white" />
        <div className="h-[50px] w-[40px] bg-[#d9d9d9]" />
        <div className="flex h-[40px] w-[40px] items-center justify-center border-[1.5px] border-[#b8b8b8] bg-white">
          <svg width="20" height="14" viewBox="0 0 20 14" className="block">
            <path d="M0 0H20L10 14Z" fill="#777777" />
          </svg>
        </div>
      </div>
    </div>
  )
}

function SheetTabs() {
  return (
    <div className="flex h-[51px] shrink-0 border-t-[2px] border-b border-t-[#a3a3a3] border-b-[#c8c6c4] bg-[#e6e6e6]">
      <div className="flex w-[170px] items-center pb-[2px] pl-[36px]">
        <svg width="62" height="26" viewBox="0 0 62 26" className="block">
          <path d="M11 0V26L0 13ZM52 0V26L62 13Z" fill="#c8c6c4" />
        </svg>
      </div>
      <div className="-mt-[2px] flex h-[47px] w-[138px] items-center justify-center border-x border-b-[3px] border-x-[#a3a3a3] border-b-[#217346] bg-white text-[31px] font-bold text-[#217346]">
        Foglio1
      </div>
      <div className="ml-[55px] flex items-start pt-[4px]">
        <svg width="42" height="41" viewBox="0 0 42 41" className="block">
          <circle cx="21" cy="20.5" r="19.5" fill="none" stroke="#8a8886" strokeWidth="2" />
          <path d="M21 10V31M10 20.5H32" stroke="#7a7a7a" strokeWidth="4" />
        </svg>
      </div>
      <div className="flex-1" />
      <div className="flex w-[1543px] shrink-0 pt-[3px]">
        <div className="flex h-[40px] w-[31px] flex-col gap-[5px] pt-[9px]">
          <div className="h-[5px] w-[5px] bg-[#b3b0ad]" />
          <div className="h-[5px] w-[5px] bg-[#b3b0ad]" />
          <div className="h-[5px] w-[5px] bg-[#b3b0ad]" />
        </div>
        <div className="flex h-[40px] w-[42px] items-center justify-center border-[1.5px] border-[#ababab] bg-white">
          <svg width="12" height="22" viewBox="0 0 12 22" className="block">
            <path d="M12 0V22L0 11Z" fill="#6e6e6e" />
          </svg>
        </div>
        <div className="h-[40px] w-[1318px] border-y-[1.5px] border-r-[1.5px] border-[#ababab] bg-white" />
        <div className="h-[40px] w-[65px] bg-[#d9d9d9]" />
        <div className="ml-[2px] flex h-[40px] w-[41px] items-center justify-center border-[1.5px] border-[#b8b8b8] bg-white">
          <svg width="12" height="22" viewBox="0 0 12 22" className="block">
            <path d="M0 0V22L12 11Z" fill="#6e6e6e" />
          </svg>
        </div>
      </div>
    </div>
  )
}

function StatusBar() {
  return (
    <div className="flex h-[82px] shrink-0 border-b-[2px] border-[#1f2d30] bg-[#f3f2f1] text-[26px] text-[#444444]">
      <div className="flex items-center pl-[13px]">Pronto</div>
      <div className="ml-[37px] flex items-center">
        <svg width="46" height="46" viewBox="0 0 46 46" className="block">
          <rect x="4" y="9" width="41" height="35" fill="#fafafa" stroke="#6e6e6e" strokeWidth="1.2" />
          <rect x="4" y="9" width="41" height="9" fill="#6e6e6e" />
          <circle cx="10" cy="10" r="10" fill="#6e6e6e" />
          <path d="M8 24H42M8 29H42M8 34H42M8 39H42" stroke="#8a8886" strokeWidth="1.4" strokeDasharray="9 1.5" />
        </svg>
      </div>
      <div className="ml-auto flex">
        <div className="flex h-[80px] w-[76px] items-center justify-center bg-[#c6c6c6]">
          <svg width="32" height="32" viewBox="0 0 32 32" className="block">
            <path d="M.75.75H31.25V31.25H.75ZM.75 11H31.25M.75 21H31.25M11 .75V31.25M21 .75V31.25" fill="none" stroke="#7a7a7a" strokeWidth="1.5" />
          </svg>
        </div>
        <div className="ml-[21px] flex h-[80px] items-center">
          <svg width="34" height="32" viewBox="0 0 34 32" className="block">
            <rect x=".75" y=".75" width="32.5" height="30.5" fill="none" stroke="#7a7a7a" strokeWidth="1.5" />
            <rect x="8" y="5" width="18" height="22" fill="none" stroke="#7a7a7a" strokeWidth="1.5" />
            <path d="M11 10H23M11 14H23M11 18H23M11 22H23" stroke="#7a7a7a" strokeWidth="1.5" />
          </svg>
        </div>
        <div className="ml-[41px] flex h-[80px] items-center">
          <svg width="34" height="33" viewBox="0 0 34 33" className="block">
            <path d="M.75.75H33.25V32.25H.75ZM.75 19H20.5V.75M10 .75V19" fill="none" stroke="#7a7a7a" strokeWidth="1.5" />
          </svg>
        </div>
        <div className="ml-[32px] flex h-[80px] items-center">
          <div className="h-[6px] w-[17px] bg-[#6e6e6e]" />
          <div className="relative ml-[10px] h-[4px] w-[248px] bg-[#b3b0ad]">
            <div className="absolute top-[-14px] left-[118px] h-[28px] w-[13px] bg-[#777777]" />
          </div>
          <svg width="19" height="19" viewBox="0 0 19 19" className="ml-[9px] block">
            <path d="M9.5 0V19M0 9.5H19" stroke="#6e6e6e" strokeWidth="4.4" />
          </svg>
        </div>
        <div className="ml-[24px] flex h-[80px] w-[79px] items-center text-[26px]">100%</div>
      </div>
    </div>
  )
}

export default function App() {
  return (
    <div className="relative flex h-[2000px] w-[3840px] flex-col overflow-hidden bg-[#e6e6e6] font-['Open_Sans','Liberation_Sans',sans-serif]">
      <TabBar />
      <Ribbon />
      <FormulaBar />
      <Sheet />
      <SheetTabs />
      <StatusBar />
      <MainMenu />
      <SubMenu />
      <WebTooltip />
    </div>
  )
}
